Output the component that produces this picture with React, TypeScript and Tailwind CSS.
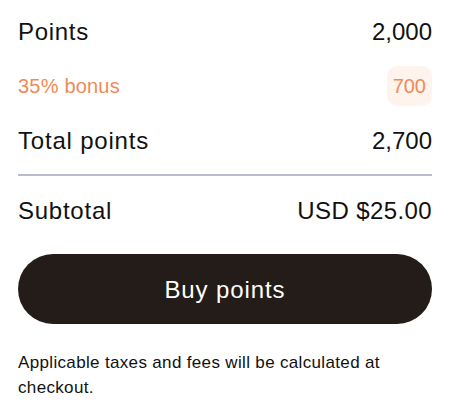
export default function App() {
  return (
    <div
      className="w-[450px] h-[408px] bg-white px-[18px] text-[#111111]"
      style={{ fontFamily: '"Liberation Sans", Arial, sans-serif' }}
    >
      <div className="flex h-[64px] items-center justify-between text-[24px]">
        <span className="tracking-[0.7px]">Points</span>
        <span>2,000</span>
      </div>

      <div className="flex h-[44px] items-center justify-between text-[20px] text-[#f08a57]">
        <span className="tracking-[0.2px]">35% bonus</span>
        <span className="flex h-[40px] items-center rounded-[10px] bg-[#fff4ed] px-[6px]">700</span>
      </div>

      <div className="flex h-[66px] items-center justify-between text-[24px]">
        <span className="tracking-[0.8px]">Total points</span>
        <span>2,700</span>
      </div>

      <div className="h-[2px] bg-[#b9bccc]" />

      <div className="flex h-[70px] items-center justify-between text-[24px]">
        <span className="tracking-[0.75px]">Subtotal</span>
        <span className="tracking-[0.4px]">USD $25.00</span>
      </div>

      <button className="mt-[8px] flex h-[70px] w-full items-center justify-center rounded-full bg-[#231c18] pt-[2px] text-[24px] tracking-[0.9px] text-white">
        Buy points
      </button>

      <p className="mt-[26px] text-[17px] leading-[25px] tracking-[0.34px] text-[#111111]">
        Applicable taxes and fees will be calculated at checkout.
      </p>
    </div>
  );
}
